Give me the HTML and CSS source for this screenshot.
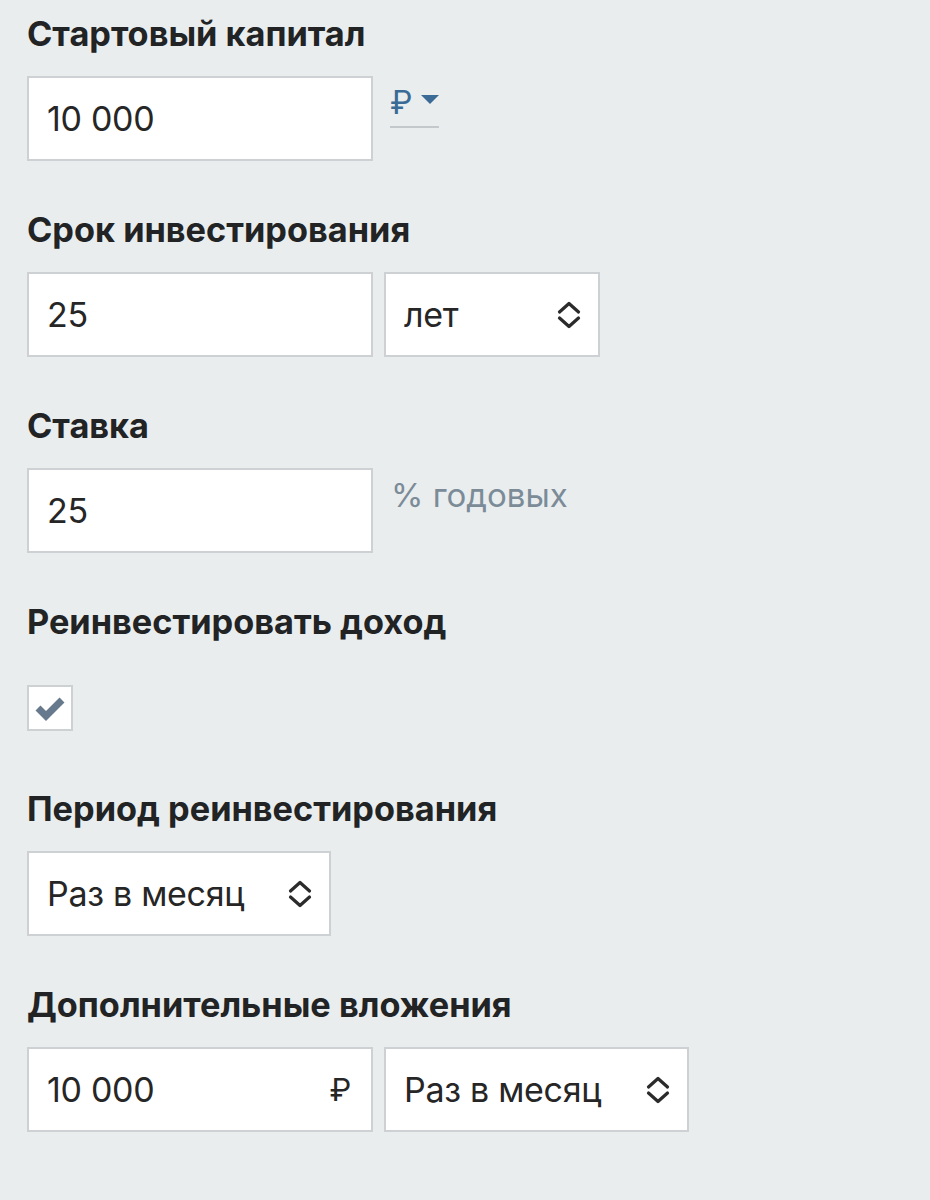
FILE: index.html
```html
<!DOCTYPE html>
<html lang="ru">
<head>
<meta charset="utf-8">
<link rel="stylesheet" href="styles.css">
</head>
<body>
<div class="form">
  <div class="field">
    <div class="label">Стартовый капитал</div>
    <div class="row">
      <div class="input w346"><span>10 000</span></div>
      <div class="currency">
        <span class="rub">₽</span>
        <svg class="caret" width="18" height="9" viewBox="0 0 18 9"><path d="M0 0H18L9 9Z" fill="#3a6b96"/></svg>
      </div>
    </div>
  </div>

  <div class="field">
    <div class="label">Срок инвестирования</div>
    <div class="row">
      <div class="input w346"><span>25</span></div>
      <div class="input select w216"><span>лет</span>
        <svg class="updown" width="26" height="32" viewBox="0 0 26 32"><path d="M3.5 13L13 4.5L22.5 13M3.5 19L13 27.5L22.5 19" fill="none" stroke="#2b2b2b" stroke-width="3.2" stroke-linecap="round" stroke-linejoin="round"/></svg>
      </div>
    </div>
  </div>

  <div class="field">
    <div class="label">Ставка</div>
    <div class="row">
      <div class="input w346"><span>25</span></div>
      <div class="suffix">% годовых</div>
    </div>
  </div>

  <div class="field">
    <div class="label">Реинвестировать доход</div>
    <div class="row check-row">
      <div class="checkbox">
        <svg width="32" height="26" viewBox="0 0 32 26"><path d="M4 13L12 21L28 5" fill="none" stroke="#66798d" stroke-width="7" stroke-linejoin="miter"/></svg>
      </div>
    </div>
  </div>

  <div class="field">
    <div class="label">Период реинвестирования</div>
    <div class="row">
      <div class="input select w304"><span>Раз в месяц</span>
        <svg class="updown" width="26" height="32" viewBox="0 0 26 32"><path d="M3.5 13L13 4.5L22.5 13M3.5 19L13 27.5L22.5 19" fill="none" stroke="#2b2b2b" stroke-width="3.2" stroke-linecap="round" stroke-linejoin="round"/></svg>
      </div>
    </div>
  </div>

  <div class="field">
    <div class="label">Дополнительные вложения</div>
    <div class="row">
      <div class="input w346 with-unit"><span>10 000</span><span class="unit">₽</span></div>
      <div class="input select w305"><span>Раз в месяц</span>
        <svg class="updown" width="26" height="32" viewBox="0 0 26 32"><path d="M3.5 13L13 4.5L22.5 13M3.5 19L13 27.5L22.5 19" fill="none" stroke="#2b2b2b" stroke-width="3.2" stroke-linecap="round" stroke-linejoin="round"/></svg>
      </div>
    </div>
  </div>
</div>
</body>
</html>
```

FILE: styles.css
```css
html, body {
  margin: 0;
  padding: 0;
  background: #e9edee;
}

body {
  font-family: Inter, "Noto Sans", "DejaVu Sans", sans-serif;
  color: #222324;
  width: 930px;
  height: 1200px;
  overflow: hidden;
}

.form {
  padding: 14px 0 0 27px;
}

.field {
  margin-bottom: 49px;
}

.label {
  font-size: 34.3px;
  font-weight: 700;
  line-height: 40px;
  height: 40px;
  margin-bottom: 22px;
  letter-spacing: 0;
}

.row {
  display: flex;
  gap: 11px;
  align-items: stretch;
}

.input {
  box-sizing: border-box;
  height: 85px;
  background: #fff;
  border: 2px solid #cdd1d3;
  display: flex;
  align-items: center;
  padding: 0 18px;
  font-size: 34px;
  letter-spacing: -0.3px;
  font-weight: 400;
  color: #262626;
}

.w346 { width: 346px; }
.w216 { width: 216px; }
.w304 { width: 304px; }
.w305 { width: 305px; }

.select {
  justify-content: space-between;
  padding-right: 16px;
}

.with-unit {
  justify-content: space-between;
  padding-right: 20px;
}

.unit {
  font-size: 31px;
}

.currency {
  display: flex;
  align-items: center;
  gap: 9px;
  align-self: flex-start;
  margin-top: 10px;
  margin-left: 6px;
  padding-bottom: 6px;
  height: 34px;
  border-bottom: 2px solid #c3c8cb;
}

.rub {
  color: #3a6b96;
  font-size: 32px;
  font-weight: 400;
  line-height: 34px;
}

.caret {
  margin-top: -8px;
}

.suffix {
  color: #7b8b98;
  font-size: 33px;
  align-self: flex-start;
  margin-left: 7px;
  margin-top: 7px;
  line-height: 40px;
}

.check-row {
  height: 76px;
  align-items: flex-start;
}

.checkbox {
  box-sizing: border-box;
  width: 46px;
  height: 46px;
  margin-top: 21px;
  background: #fff;
  border: 2px solid #cdd1d3;
  display: flex;
  align-items: center;
  justify-content: center;
}
```
